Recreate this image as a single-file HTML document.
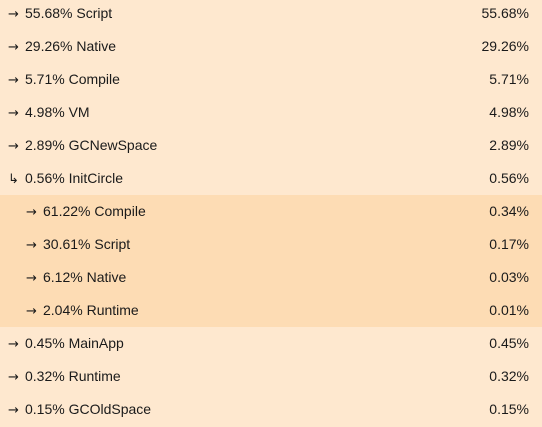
<!DOCTYPE html>
<html><head><style>
body{margin:0;width:542px;height:423px;overflow:hidden;background:#fee8cf;font-family:"Liberation Sans",sans-serif;font-size:14px;color:#1a1a1a}
.w{position:absolute;top:-3px;left:0;width:542px}
.r{height:33px;line-height:33px;display:flex;justify-content:space-between;padding:0 13px 0 8px}
.n{background:#fddcb4;padding-left:26px}
.a{font-family:"DejaVu Sans",sans-serif;font-size:13px;display:inline-block;width:17px}
</style></head><body><div class="w">
<div class="r"><span><span class="a">→</span>55.68% Script</span><span>55.68%</span></div>
<div class="r"><span><span class="a">→</span>29.26% Native</span><span>29.26%</span></div>
<div class="r"><span><span class="a">→</span>5.71% Compile</span><span>5.71%</span></div>
<div class="r"><span><span class="a">→</span>4.98% VM</span><span>4.98%</span></div>
<div class="r"><span><span class="a">→</span>2.89% GCNewSpace</span><span>2.89%</span></div>
<div class="r"><span><span class="a">↳</span>0.56% InitCircle</span><span>0.56%</span></div>
<div class="r n"><span><span class="a">→</span>61.22% Compile</span><span>0.34%</span></div>
<div class="r n"><span><span class="a">→</span>30.61% Script</span><span>0.17%</span></div>
<div class="r n"><span><span class="a">→</span>6.12% Native</span><span>0.03%</span></div>
<div class="r n"><span><span class="a">→</span>2.04% Runtime</span><span>0.01%</span></div>
<div class="r"><span><span class="a">→</span>0.45% MainApp</span><span>0.45%</span></div>
<div class="r"><span><span class="a">→</span>0.32% Runtime</span><span>0.32%</span></div>
<div class="r"><span><span class="a">→</span>0.15% GCOldSpace</span><span>0.15%</span></div>
</div></body></html>
